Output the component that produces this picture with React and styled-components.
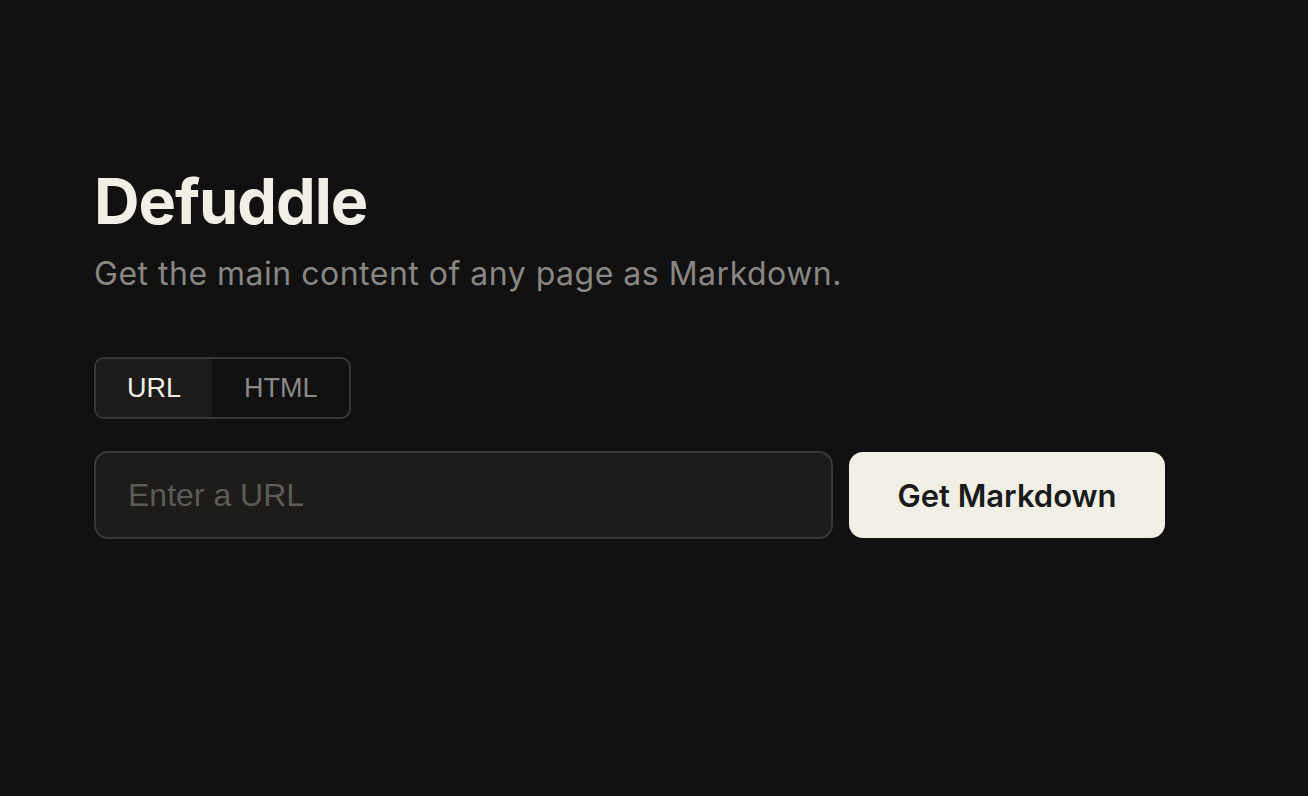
import styled, { createGlobalStyle } from "styled-components";

const GlobalStyle = createGlobalStyle`
  html, body {
    margin: 0;
    background: #111111;
  }
  body {
    font-family: Inter, "Noto Sans", sans-serif;
  }
`;

const StPage = styled.div`
  min-height: 796px;
  padding: 166px 94px 0;
  box-sizing: border-box;
`;

const StTitle = styled.h1`
  margin: 0;
  font-size: 63px;
  font-weight: 700;
  letter-spacing: -1px;
  line-height: 70px;
  color: #f1efe5;
`;

const StSubtitle = styled.p`
  margin: 18px 0 0;
  font-size: 32px;
  letter-spacing: 0.5px;
  line-height: 40px;
  color: #888784;
`;

const StTabs = styled.div`
  display: inline-flex;
  margin-top: 63px;
  border: 2px solid #383838;
  border-radius: 10px;
  overflow: hidden;
`;

const StTab = styled.button`
  border: none;
  margin: 0;
  height: 58px;
  padding: 0 ${(p) => (p.$active ? "31px" : "31px 0 32px")};
  font-family: "Liberation Sans", Arial, sans-serif;
  font-size: 27px;
  background: ${(p) => (p.$active ? "#1d1c1a" : "transparent")};
  color: ${(p) => (p.$active ? "#f1efe5" : "#8a8986")};
  cursor: pointer;
`;

const StForm = styled.div`
  display: flex;
  gap: 16px;
  margin-top: 32px;
`;

const StInput = styled.input`
  width: 739px;
  height: 88px;
  box-sizing: border-box;
  padding: 0 32px;
  background: #1d1c1a;
  border: 2px solid #383838;
  border-radius: 14px;
  font-family: "Liberation Sans", Arial, sans-serif;
  font-size: 32px;
  color: #f1efe5;
  outline: none;

  &::placeholder {
    color: #5c5b58;
  }
`;

const StButton = styled.button`
  width: 316px;
  height: 86px;
  margin-top: 1px;
  border: none;
  border-radius: 14px;
  background: #f1efe5;
  color: #1a1a1a;
  font-family: Inter, "Noto Sans", sans-serif;
  font-size: 31px;
  font-weight: 600;
  cursor: pointer;
`;

function App() {
  return (
    <>
      <GlobalStyle />
      <StPage>
        <StTitle>Defuddle</StTitle>
        <StSubtitle>Get the main content of any page as Markdown.</StSubtitle>
        <StTabs>
          <StTab $active>URL</StTab>
          <StTab>HTML</StTab>
        </StTabs>
        <StForm>
          <StInput placeholder="Enter a URL" />
          <StButton>Get Markdown</StButton>
        </StForm>
      </StPage>
    </>
  );
}

export default App;
